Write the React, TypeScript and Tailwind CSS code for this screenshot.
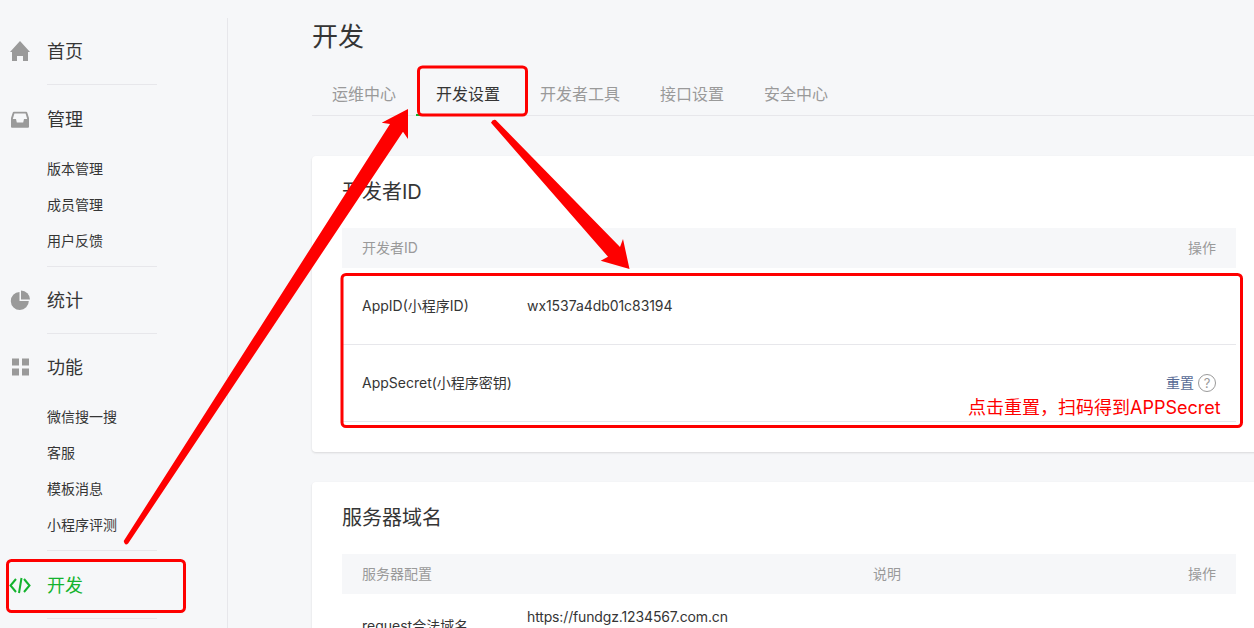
const FONT = { fontFamily: '"Inter", "Noto Sans CJK SC", sans-serif' };

const HomeIcon = () => (
  <svg width="22" height="22" viewBox="0 0 22 22" fill="#9a9a9a">
    <path d="M11 1 L21 12 L19 12 L19 21 L14 21 L14 16 L8 16 L8 21 L3 21 L3 12 L1 12 Z" />
  </svg>
);

const InboxIcon = () => (
  <svg width="22" height="22" viewBox="0 0 22 22" fill="#9a9a9a">
    <path
      d="M5 3.7 H17 A1.2 1.2 0 0 1 18.2 4.6 L20 10 V18.7 A1 1 0 0 1 19 19.7 H3 A1 1 0 0 1 2 18.7 V10 L3.8 4.6 A1.2 1.2 0 0 1 5 3.7 Z M5.4 5.4 L3.8 11 H7 L7.8 14.5 H14.2 L15 11 H18.2 L16.6 5.4 Z"
      fillRule="evenodd"
    />
  </svg>
);

const PieIcon = () => (
  <svg width="22" height="22" viewBox="0 0 22 22" fill="#9a9a9a">
    <path d="M10.5 3 V12 H19.8 A9 9 0 1 1 10.5 3 Z" />
    <path d="M12 1.5 A9 9 0 0 1 21 10.5 H12 Z" />
  </svg>
);

const GridIcon = () => (
  <svg width="22" height="22" viewBox="0 0 22 22" fill="#9a9a9a">
    <rect x="3" y="2.5" width="7" height="7" />
    <rect x="13" y="2.5" width="7" height="7" />
    <rect x="3" y="12.5" width="7" height="7" />
    <rect x="13" y="12.5" width="7" height="7" />
  </svg>
);

const CodeIcon = () => (
  <svg width="22" height="22" viewBox="0 0 22 22" fill="none" stroke="#14b32e" strokeWidth="2">
    <path d="M7 5 L1.5 11.5 L7 18" />
    <path d="M15 5 L20.5 11.5 L15 18" />
    <path d="M12.5 4 L10 19" />
  </svg>
);

const NavHead = ({ icon, label, active }: { icon: React.ReactNode; label: string; active?: boolean }) => (
  <div className="flex h-[34px] items-center">
    <div className="flex w-[47px] justify-center pr-[7px]">{icon}</div>
    <span className={`text-[18px] ${active ? "text-[#14b32e]" : "text-[#353535]"}`}>{label}</span>
  </div>
);

const SubList = ({ items }: { items: string[] }) => (
  <div className="mt-[15px] pb-[7px] pl-[47px]">
    {items.map((t) => (
      <div key={t} className="flex h-9 items-center text-sm text-[#353535]">
        {t}
      </div>
    ))}
  </div>
);

const Line = () => <div className="ml-[47px] h-px w-[110px] bg-[#e7e7eb]"></div>;

const Sidebar = () => (
  <aside className="mt-[18px] h-[610px] w-[228px] shrink-0 border-r border-[#e7e7eb] pt-4">
    <NavHead icon={<HomeIcon />} label="首页" />
    <div className="h-4"></div>
    <Line />
    <div className="h-[17px]"></div>
    <NavHead icon={<InboxIcon />} label="管理" />
    <SubList items={["版本管理", "成员管理", "用户反馈"]} />
    <Line />
    <div className="h-4"></div>
    <NavHead icon={<PieIcon />} label="统计" />
    <div className="h-4"></div>
    <Line />
    <div className="h-4"></div>
    <NavHead icon={<GridIcon />} label="功能" />
    <SubList items={["微信搜一搜", "客服", "模板消息", "小程序评测"]} />
    <Line />
    <div className="h-[17px]"></div>
    <NavHead icon={<CodeIcon />} label="开发" active />
    <div className="h-4"></div>
    <Line />
  </aside>
);

const tabs = ["运维中心", "开发设置", "开发者工具", "接口设置", "安全中心"];

const Tabs = () => (
  <div className="mt-[17px] flex h-[43px] border-b border-[#e7e7eb]">
    {tabs.map((t) => (
      <div
        key={t}
        className={`flex h-[43px] items-center border-b-2 px-5 text-base ${
          t === "开发设置" ? "border-[#14b32e] text-[#353535]" : "border-transparent text-[#9a9a9a]"
        }`}
      >
        {t}
      </div>
    ))}
  </div>
);

const App = () => {
  return (
    <div className="relative flex h-[628px] overflow-hidden bg-[#f6f7f9]" style={FONT}>
      <Sidebar />

      <main className="ml-[84px] w-[954px] shrink-0">
        <h1 className="mt-[18px] h-[38px] text-[26px] leading-[38px] font-normal text-[#353535]">开发</h1>
        <Tabs />

        {/* 开发者ID */}
        <section className="mt-10 rounded bg-white px-[30px] pb-[30px] shadow-[0_1px_2px_rgba(150,150,150,0.3)]">
          <h2 className="flex h-[72px] items-center text-[20px] font-normal text-[#353535]">开发者ID</h2>
          <div className="flex h-10 items-center justify-between bg-[#f6f7f9] px-5 text-sm text-[#9a9a9a]">
            <span>开发者ID</span>
            <span>操作</span>
          </div>
          <div className="flex h-[77px] items-center border-b border-[#e7e7eb] px-5 text-sm text-[#353535]">
            <span className="w-[165px]">AppID(小程序ID)</span>
            <span className="tracking-[-0.06px]">wx1537a4db01c83194</span>
          </div>
          <div className="flex h-[77px] items-center justify-between border-b border-[#e7e7eb] px-5 text-sm text-[#353535]">
            <span>AppSecret(小程序密钥)</span>
            <span className="flex items-center gap-1">
              <span className="text-[#576b95]">重置</span>
              <span className="flex h-[18px] w-[18px] items-center justify-center rounded-full border border-[#9a9a9a] text-[13px] text-[#9a9a9a]">
                ?
              </span>
            </span>
          </div>
        </section>

        {/* 服务器域名 */}
        <section className="mt-[30px] rounded bg-white px-[30px] shadow-[0_1px_2px_rgba(150,150,150,0.3)]">
          <h2 className="flex h-[72px] items-center text-[20px] font-normal text-[#353535]">服务器域名</h2>
          <div className="grid h-10 grid-cols-[511px_1fr_auto] items-center bg-[#f6f7f9] px-5 text-sm text-[#9a9a9a]">
            <span>服务器配置</span>
            <span>说明</span>
            <span>操作</span>
          </div>
          <div className="flex px-5 pt-[13px] text-sm text-[#353535]">
            <span className="w-[165px] pt-[9px]">request合法域名</span>
            <span className="tracking-[-0.14px]">https://fundgz.1234567.com.cn</span>
          </div>
        </section>
      </main>

      {/* 红色标注 */}
      <svg className="absolute inset-0" width="1254" height="628" viewBox="0 0 1254 628" fill="none">
        <rect x="418.5" y="67" width="108" height="48" rx="4" stroke="#fe0000" strokeWidth="3" />
        <rect x="342" y="274.5" width="899.5" height="152" rx="4" stroke="#fe0000" strokeWidth="3" />
        <rect x="7.5" y="560.5" width="177" height="51" rx="4" stroke="#fe0000" strokeWidth="3" />
        <path
          d="M123.7 541 L390 124 L381.7 122.7 L408 109 L408 139 L403 131.7 L128.3 543.3 Q125 546.5 123.7 541 Z"
          fill="#fe0000"
        />
        <path
          d="M491 122.7 Q492.5 119 495.7 120 L620 247 L623 239 L629.5 269 L600.7 260.7 L608 256.7 Z"
          fill="#fe0000"
        />
      </svg>
      <span className="absolute top-[396px] left-[968px] text-[18px] leading-6 text-[#fe0000]">
        {"点击重置\uFF0C扫码得到APPSecret"}
      </span>
    </div>
  );
};

export default App;
